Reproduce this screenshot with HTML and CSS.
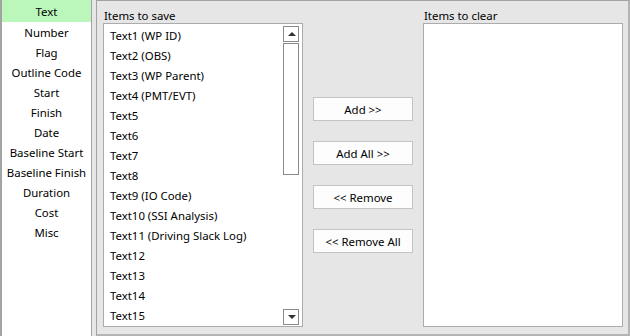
FILE: index.html
```html
<!DOCTYPE html>
<html lang="en">

<head>
    <meta charset="UTF-8">
    <meta name="viewport" content="width=device-width, initial-scale=1.0">
    <title>Clear Fields</title>
    <link rel="stylesheet" href="styles.css">
</head>

<body>
    <div class="window">
        <ul class="fields">
            <li class="selected">Text</li>
            <li>Number</li>
            <li>Flag</li>
            <li>Outline Code</li>
            <li>Start</li>
            <li>Finish</li>
            <li>Date</li>
            <li>Baseline Start</li>
            <li>Baseline Finish</li>
            <li>Duration</li>
            <li>Cost</li>
            <li>Misc</li>
        </ul>

        <div class="panel">
            <div class="column">
                <div class="caption">Items to save</div>
                <div class="listbox">
                    <ul class="items">
                        <li>Text1 (WP ID)</li>
                        <li>Text2 (OBS)</li>
                        <li>Text3 (WP Parent)</li>
                        <li>Text4 (PMT/EVT)</li>
                        <li>Text5</li>
                        <li>Text6</li>
                        <li>Text7</li>
                        <li>Text8</li>
                        <li>Text9 (IO Code)</li>
                        <li>Text10 (SSI Analysis)</li>
                        <li>Text11 (Driving Slack Log)</li>
                        <li>Text12</li>
                        <li>Text13</li>
                        <li>Text14</li>
                        <li>Text15</li>
                    </ul>
                    <div class="scrollbar">
                        <div class="arrow up"></div>
                        <div class="thumb"></div>
                        <div class="arrow down"></div>
                    </div>
                </div>
            </div>

            <div class="btns">
                <button class="btn">Add &gt;&gt;</button>
                <button class="btn">Add All &gt;&gt;</button>
                <button class="btn">&lt;&lt; Remove</button>
                <button class="btn">&lt;&lt; Remove All</button>
            </div>

            <div class="column">
                <div class="caption">Items to clear</div>
                <div class="listbox"></div>
            </div>
        </div>
    </div>
</body>

</html>
```

FILE: styles.css
```css
/* reset */
html,
body {
    width: 100%;
    height: 100%
}

body,
ul,
li,
button {
    margin: 0;
    padding: 0
}

body,
button {
    font-family: 'Noto Sans', 'Open Sans', sans-serif;
    font-size: 11.4px;
    color: #000
}

ul {
    list-style: none
}

/*style*/

.window {
    display: flex;
    gap: 4px;
    width: 630px;
    height: 336px;
    background-color: #e6e6e6;
}

.fields {
    width: 89px;
    height: 336px;
    background-color: #fff;
    border-left: solid 2px #a3a3a3;
    border-right: solid 1px #a3a3a3;
}

.fields li {
    height: 20px;
    line-height: 21px;
    text-align: center;
    white-space: nowrap;
}

.fields li.selected {
    height: 22px;
    line-height: 24px;
    background-color: #bbf7bb;
}

.panel {
    flex: 1;
    display: flex;
    gap: 10px;
    padding: 6px 5px 7px 6px;
    border-top: solid 1px #a3a3a3;
    border-left: solid 1px #a3a3a3;
    border-right: solid 2px #b4b4b4;
    border-bottom: solid 2px #b4b4b4;
}

.column {
    width: 200px;
    display: flex;
    flex-direction: column;
}

.caption {
    height: 16px;
    line-height: 18px;
    padding-left: 1px;
}

.listbox {
    flex: 1;
    display: flex;
    background-color: #fff;
    border: solid 1px #ababab;
}

.items {
    flex: 1;
    padding: 1px 0 0 6px;
}

.items li {
    height: 20px;
    line-height: 21px;
    white-space: nowrap;
}

.scrollbar {
    width: 16px;
    margin: 2px 3px 1px 0;
    display: flex;
    flex-direction: column;
}

.arrow {
    position: relative;
    height: 14px;
    border: solid 1px #8a8a8a;
}

.arrow::after {
    content: '';
    position: absolute;
    left: 4px;
    top: 5px;
    border-left: 4px solid transparent;
    border-right: 4px solid transparent;
}

.up::after {
    border-bottom: 4px solid #333;
}

.down {
    margin-top: auto;
}

.down::after {
    border-top: 4px solid #333;
}

.thumb {
    height: 130px;
    margin-top: 1px;
    border: solid 1px #8a8a8a;
}

.btns {
    width: 100px;
    padding-top: 90px;
    display: flex;
    flex-direction: column;
    gap: 20px;
}

.btn {
    height: 24px;
    background-color: #fdfdfd;
    border: solid 1px #c4c4c4;
}
```
